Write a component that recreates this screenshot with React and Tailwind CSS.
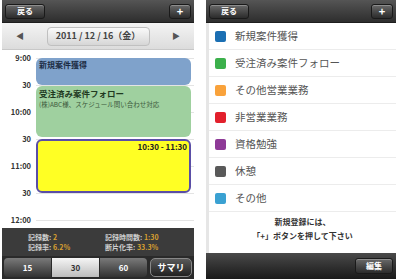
import React from "react";

const font = { fontFamily: '"Noto Sans CJK JP", "Liberation Sans", sans-serif' };

const hours = ["9:00", "30", "10:00", "30", "11:00", "30", "12:00"];

const categories = [
  { name: "新規案件獲得", color: "bg-[#1b6fb3]" },
  { name: "受注済み案件フォロー", color: "bg-[#3bb04b]" },
  { name: "その他営業業務", color: "bg-[#f9a23b]" },
  { name: "非営業業務", color: "bg-[#e2202c]" },
  { name: "資格勉強", color: "bg-[#8e3a97]" },
  { name: "休憩", color: "bg-[#595959]" },
  { name: "その他", color: "bg-[#3aa1d2]" },
];

const BarButton = ({ children, className = "" }) => (
  <div
    className={`flex items-center justify-center h-[15px] rounded-[3px] border border-[#1a1a1a] bg-gradient-to-b from-[#6a6a6a] to-[#2c2c2c] text-white text-[8px] font-bold shadow-[inset_0_1px_0_rgba(255,255,255,0.25)] ${className}`}
  >
    {children}
  </div>
);

const TopBar = () => (
  <div className="shrink-0 h-[23px] flex items-center justify-between px-[3px] bg-gradient-to-b from-[#555] to-[#2e2e2e] border-b border-[#1e1e1e]">
    <BarButton className="w-[40px]">戻る</BarButton>
    <BarButton className="w-[22px] text-[11px]">+</BarButton>
  </div>
);

const ScheduleScreen = () => (
  <div className="w-[192px] h-[279px] flex flex-col bg-white">
    <TopBar />
    <div className="shrink-0 h-[27px] flex items-center justify-between px-[14px] bg-gradient-to-b from-[#f4f4f4] to-[#dcdcdc] border-b border-[#c8c8c8]">
      <span className="text-[8px] text-[#555]">◀</span>
      <div className="w-[103px] h-[19px] rounded-[4px] flex items-center justify-center bg-gradient-to-b from-[#fafafa] to-[#d6d6d6] border border-[#c0c0c0] text-[9px] font-bold text-[#444]">
        2011 / 12 / 16（金）
      </div>
      <span className="text-[8px] text-[#555]">▶</span>
    </div>
    <div className="relative shrink-0 h-[178px] pt-[8px] bg-white">
      {hours.map((h, i) => (
        <div key={i} className={`${i === 6 ? "h-[8px]" : "h-[27px]"} flex items-start`}>
          <div className="w-[29px] text-right text-[7.5px] font-bold text-[#333] leading-none -translate-y-1/2">
            {h}
          </div>
          <div className="flex-1 ml-[5px] h-px bg-[#e4e4e4]" />
        </div>
      ))}
      <div className="absolute left-[34px] right-[3px] top-[8px] h-[27px] rounded-[6px] bg-[#7fa2cb] px-[3px] pt-[2px]">
        <div className="text-[8px] font-bold text-[#1c2c44] leading-[10px]">新規案件獲得</div>
      </div>
      <div className="absolute left-[34px] right-[3px] top-[36px] h-[51px] rounded-[6px] bg-[#9fd09f] px-[3px] pt-[2px] flex flex-col">
        <div className="h-[11px] text-[8.5px] font-bold text-[#1f3a1f] leading-[11px]">受注済み案件フォロー</div>
        <div className="h-[10px] text-[6.5px] text-[#3c5a3c] leading-[10px] whitespace-nowrap">(株)ABC様、スケジュール問い合わせ対応</div>
      </div>
      <div className="absolute left-[34px] right-[3px] top-[89px] h-[54px] rounded-[6px] bg-[#ffff24] border-2 border-[#5a4ea6] px-[2px] pt-[1px]">
        <div className="text-right text-[8px] font-bold text-[#222] leading-[10px]">10:30 - 11:30</div>
      </div>
    </div>
    <div className="shrink-0 h-[28px] flex items-center bg-[#3b3b3b] text-[7px] font-bold leading-[10px] pl-[26px]">
      <div className="w-[77px]">
        <div className="text-[#cfcfcf]">記録数: <span className="text-[#d9a030]">2</span></div>
        <div className="text-[#cfcfcf]">記録率: <span className="text-[#d9a030]">6.2%</span></div>
      </div>
      <div>
        <div className="text-[#cfcfcf]">記録時間数: <span className="text-[#d9a030]">1:30</span></div>
        <div className="text-[#cfcfcf]">断片化率: <span className="text-[#d9a030]">33.3%</span></div>
      </div>
    </div>
    <div className="shrink-0 h-[23px] flex items-center gap-[1px] px-[2px] bg-[#2a2a2a]">
      <div className="w-[47px] h-[19px] flex items-center justify-center rounded-l-[4px] bg-gradient-to-b from-[#7a7a7a] to-[#333] text-white text-[8px] font-bold">15</div>
      <div className="w-[47px] h-[19px] flex items-center justify-center bg-gradient-to-b from-[#f5f5f5] to-[#bdbdbd] text-[#333] text-[8px] font-bold">30</div>
      <div className="w-[47px] h-[19px] flex items-center justify-center rounded-r-[4px] bg-gradient-to-b from-[#7a7a7a] to-[#333] text-white text-[8px] font-bold">60</div>
      <div className="ml-[2px] flex-1 h-[19px] flex items-center justify-center rounded-[5px] border border-[#888] bg-gradient-to-b from-[#5a5a5a] to-[#222] text-white text-[9px] font-bold">サマリ</div>
    </div>
  </div>
);

const CategoryScreen = () => (
  <div className="w-[190px] h-[279px] flex flex-col bg-white">
    <TopBar />
    <div className="flex-1 flex">
      <div className="w-[3px] bg-[#e6e6e6]" />
      <div className="flex-1 flex flex-col">
        {categories.map((c) => (
          <div key={c.name} className="shrink-0 h-[27px] flex items-center gap-[9px] pl-[6px] border-b border-[#ececec]">
            <div className={`w-[11px] h-[11px] rounded-[2px] ${c.color}`} />
            <span className="text-[10.5px] text-[#555]">{c.name}</span>
          </div>
        ))}
        <div className="flex-1 flex flex-col items-center pt-[3px] text-[8px] font-bold text-[#333] leading-[14px]">
          <div>新規登録には、</div>
          <div>「+」ボタンを押して下さい</div>
        </div>
      </div>
    </div>
    <div className="shrink-0 h-[26px] flex items-center justify-end px-[3px] bg-gradient-to-b from-[#4a4a4a] to-[#1a1a1a]">
      <BarButton className="w-[38px] h-[16px]">編集</BarButton>
    </div>
  </div>
);

export default function App() {
  return (
    <div className="w-[400px] h-[279px] flex bg-white overflow-hidden" style={font}>
      <div className="ml-[2px]">
        <ScheduleScreen />
      </div>
      <div className="ml-[12px]">
        <CategoryScreen />
      </div>
    </div>
  );
}
